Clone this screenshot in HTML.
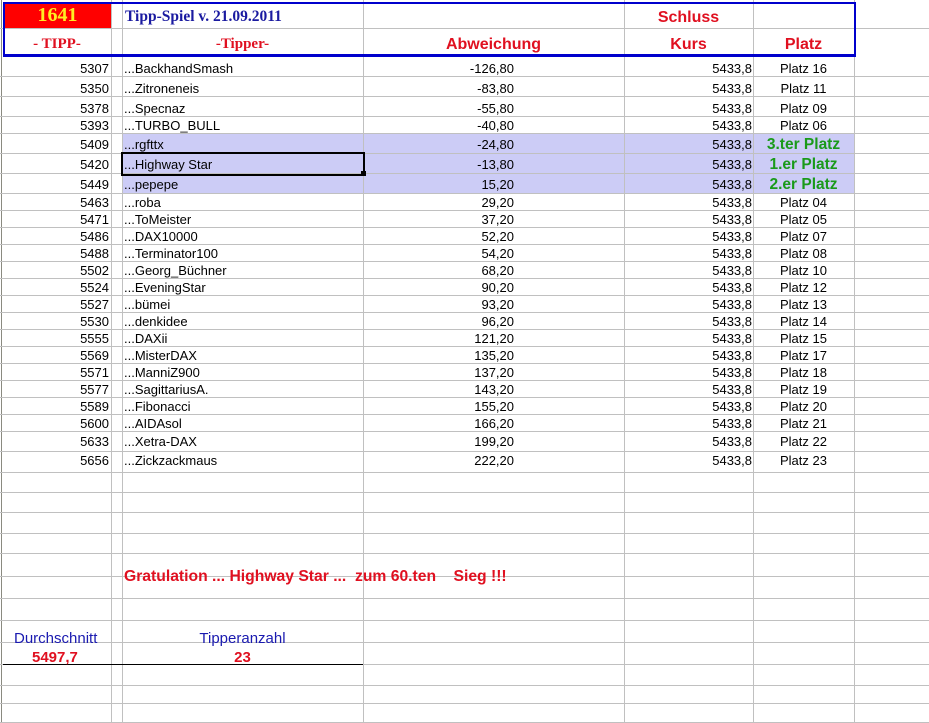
<!DOCTYPE html>
<html><head><meta charset="utf-8"><style>
body{margin:0;width:929px;height:723px;background:#fff;overflow:hidden;position:relative;font-family:"Liberation Sans",Arial,sans-serif;font-size:13px;color:#000}
.h{position:absolute;left:0;width:929px;height:1px;background:#c0c0c0}
.v{position:absolute;top:0;height:723px;width:1px;background:#c0c0c0}
.r{position:absolute;left:0;width:929px}
.r span{position:absolute;white-space:nowrap}
.t{right:820px;text-align:right}
.n{left:124px}
.a{right:415px;text-align:right}
.k{right:177px;text-align:right}
.p{left:753px;width:101px;text-align:center}
.g{color:#1a9a1a;font-weight:bold;font-size:15.5px}
.ab{position:absolute;white-space:nowrap}
</style></head><body>
<div style="position:absolute;left:122px;top:133px;width:732px;height:60px;background:#ccccf6"></div>
<div style="position:absolute;left:4px;top:4px;width:107px;height:24px;background:#ff0000"></div>

<div class="v" style="left:1px;background:#8a8a80"></div>
<div class="v" style="left:111px"></div>
<div class="v" style="left:122px"></div>
<div class="v" style="left:363px"></div>
<div class="v" style="left:624px"></div>
<div class="v" style="left:753px"></div>
<div class="v" style="left:854px"></div>

<div class="h" style="top:28px"></div>
<div class="h" style="top:76px"></div><div class="h" style="top:96px"></div><div class="h" style="top:116px"></div><div class="h" style="top:133px"></div><div class="h" style="top:153px"></div><div class="h" style="top:173px"></div><div class="h" style="top:193px"></div><div class="h" style="top:210px"></div><div class="h" style="top:227px"></div><div class="h" style="top:244px"></div><div class="h" style="top:261px"></div><div class="h" style="top:278px"></div><div class="h" style="top:295px"></div><div class="h" style="top:312px"></div><div class="h" style="top:329px"></div><div class="h" style="top:346px"></div><div class="h" style="top:363px"></div><div class="h" style="top:380px"></div><div class="h" style="top:397px"></div><div class="h" style="top:414px"></div><div class="h" style="top:431px"></div><div class="h" style="top:451px"></div><div class="h" style="top:472px"></div><div class="h" style="top:492px"></div><div class="h" style="top:512px"></div><div class="h" style="top:533px"></div><div class="h" style="top:553px"></div><div class="h" style="top:576px"></div><div class="h" style="top:598px"></div><div class="h" style="top:620px"></div><div class="h" style="top:642px"></div><div class="h" style="top:664px"></div><div class="h" style="top:685px"></div><div class="h" style="top:703px"></div><div class="h" style="top:722px"></div>

<div style="position:absolute;left:3px;top:2px;width:849px;height:50px;border:2px solid #0000cc;border-bottom-width:3px"></div>
<div style="position:absolute;left:3px;top:664px;width:360px;height:1px;background:#000"></div>

<div class="ab" style="left:4px;width:107px;top:4px;text-align:center;font:bold 20px 'Liberation Serif',serif;color:#ffee22">1641</div>
<div class="ab" style="left:125px;top:8px;font:bold 15.5px 'Liberation Serif',serif;color:#1a1aa0">Tipp-Spiel v. 21.09.2011</div>
<div class="ab" style="left:624px;width:129px;top:9px;text-align:center;font:bold 16px 'Liberation Sans',sans-serif;color:#e01020">Schluss</div>
<div class="ab" style="left:3px;width:108px;top:36px;text-align:center;font:bold 15px 'Liberation Serif',serif;color:#e01020">- TIPP-</div>
<div class="ab" style="left:122px;width:241px;top:36px;text-align:center;font:bold 15px 'Liberation Serif',serif;color:#e01020">-Tipper-</div>
<div class="ab" style="left:363px;width:261px;top:36px;text-align:center;font:bold 16px 'Liberation Sans',sans-serif;color:#e01020">Abweichung</div>
<div class="ab" style="left:624px;width:129px;top:36px;text-align:center;font:bold 16px 'Liberation Sans',sans-serif;color:#e01020">Kurs</div>
<div class="ab" style="left:753px;width:101px;top:36px;text-align:center;font:bold 16px 'Liberation Sans',sans-serif;color:#e01020">Platz</div>

<div class="r" style="top:61px;line-height:16px"><span class="t">5307</span><span class="n">...BackhandSmash</span><span class="a">-126,80</span><span class="k">5433,8</span><span class="p">Platz 16</span></div>
<div class="r" style="top:81px;line-height:16px"><span class="t">5350</span><span class="n">...Zitroneneis</span><span class="a">-83,80</span><span class="k">5433,8</span><span class="p">Platz 11</span></div>
<div class="r" style="top:101px;line-height:16px"><span class="t">5378</span><span class="n">...Specnaz</span><span class="a">-55,80</span><span class="k">5433,8</span><span class="p">Platz 09</span></div>
<div class="r" style="top:118px;line-height:16px"><span class="t">5393</span><span class="n">...TURBO_BULL</span><span class="a">-40,80</span><span class="k">5433,8</span><span class="p">Platz 06</span></div>
<div class="r" style="top:137px;line-height:16px"><span class="t">5409</span><span class="n">...rgfttx</span><span class="a">-24,80</span><span class="k">5433,8</span><span class="p g">3.ter Platz</span></div>
<div class="r" style="top:157px;line-height:16px"><span class="t">5420</span><span class="n">...Highway Star</span><span class="a">-13,80</span><span class="k">5433,8</span><span class="p g">1.er Platz</span></div>
<div class="r" style="top:177px;line-height:16px"><span class="t">5449</span><span class="n">...pepepe</span><span class="a">15,20</span><span class="k">5433,8</span><span class="p g">2.er Platz</span></div>
<div class="r" style="top:195px;line-height:16px"><span class="t">5463</span><span class="n">...roba</span><span class="a">29,20</span><span class="k">5433,8</span><span class="p">Platz 04</span></div>
<div class="r" style="top:212px;line-height:16px"><span class="t">5471</span><span class="n">...ToMeister</span><span class="a">37,20</span><span class="k">5433,8</span><span class="p">Platz 05</span></div>
<div class="r" style="top:229px;line-height:16px"><span class="t">5486</span><span class="n">...DAX10000</span><span class="a">52,20</span><span class="k">5433,8</span><span class="p">Platz 07</span></div>
<div class="r" style="top:246px;line-height:16px"><span class="t">5488</span><span class="n">...Terminator100</span><span class="a">54,20</span><span class="k">5433,8</span><span class="p">Platz 08</span></div>
<div class="r" style="top:263px;line-height:16px"><span class="t">5502</span><span class="n">...Georg_Büchner</span><span class="a">68,20</span><span class="k">5433,8</span><span class="p">Platz 10</span></div>
<div class="r" style="top:280px;line-height:16px"><span class="t">5524</span><span class="n">...EveningStar</span><span class="a">90,20</span><span class="k">5433,8</span><span class="p">Platz 12</span></div>
<div class="r" style="top:297px;line-height:16px"><span class="t">5527</span><span class="n">...bümei</span><span class="a">93,20</span><span class="k">5433,8</span><span class="p">Platz 13</span></div>
<div class="r" style="top:314px;line-height:16px"><span class="t">5530</span><span class="n">...denkidee</span><span class="a">96,20</span><span class="k">5433,8</span><span class="p">Platz 14</span></div>
<div class="r" style="top:331px;line-height:16px"><span class="t">5555</span><span class="n">...DAXii</span><span class="a">121,20</span><span class="k">5433,8</span><span class="p">Platz 15</span></div>
<div class="r" style="top:348px;line-height:16px"><span class="t">5569</span><span class="n">...MisterDAX</span><span class="a">135,20</span><span class="k">5433,8</span><span class="p">Platz 17</span></div>
<div class="r" style="top:365px;line-height:16px"><span class="t">5571</span><span class="n">...ManniZ900</span><span class="a">137,20</span><span class="k">5433,8</span><span class="p">Platz 18</span></div>
<div class="r" style="top:382px;line-height:16px"><span class="t">5577</span><span class="n">...SagittariusA.</span><span class="a">143,20</span><span class="k">5433,8</span><span class="p">Platz 19</span></div>
<div class="r" style="top:399px;line-height:16px"><span class="t">5589</span><span class="n">...Fibonacci</span><span class="a">155,20</span><span class="k">5433,8</span><span class="p">Platz 20</span></div>
<div class="r" style="top:416px;line-height:16px"><span class="t">5600</span><span class="n">...AIDAsol</span><span class="a">166,20</span><span class="k">5433,8</span><span class="p">Platz 21</span></div>
<div class="r" style="top:434px;line-height:16px"><span class="t">5633</span><span class="n">...Xetra-DAX</span><span class="a">199,20</span><span class="k">5433,8</span><span class="p">Platz 22</span></div>
<div class="r" style="top:453px;line-height:16px"><span class="t">5656</span><span class="n">...Zickzackmaus</span><span class="a">222,20</span><span class="k">5433,8</span><span class="p">Platz 23</span></div>

<div style="position:absolute;left:121px;top:152px;width:240px;height:20px;border:2px solid #000"></div>
<div style="position:absolute;left:361px;top:171px;width:5px;height:5px;background:#000"></div>

<div class="ab" style="left:124px;top:568px;font:bold 15.7px 'Liberation Sans',sans-serif;color:#e01020">Gratulation ... Highway Star ... &nbsp;zum 60.ten &nbsp;&nbsp; Sieg !!!</div>
<div class="ab" style="left:14px;top:630px;font-size:15px;color:#1a1ab0">Durchschnitt</div>
<div class="ab" style="left:122px;width:241px;top:630px;text-align:center;font-size:15px;color:#1a1ab0">Tipperanzahl</div>
<div class="ab" style="left:32px;top:649px;font:bold 15px 'Liberation Sans',sans-serif;color:#e01020">5497,7</div>
<div class="ab" style="left:122px;width:241px;top:649px;text-align:center;font:bold 15px 'Liberation Sans',sans-serif;color:#e01020">23</div>
</body></html>
